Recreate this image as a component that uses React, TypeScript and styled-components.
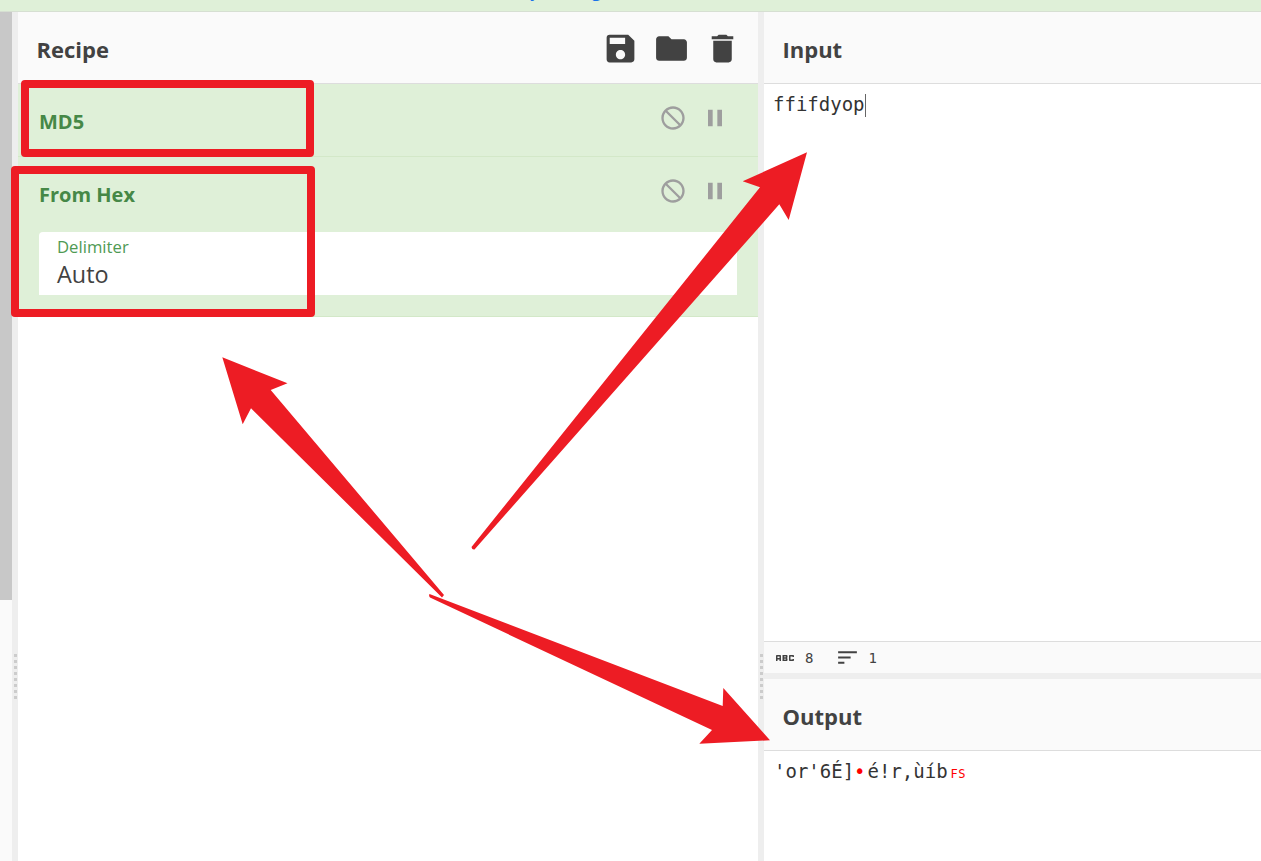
import styled, { createGlobalStyle } from 'styled-components'
import { MdAbc, MdBlock, MdDelete, MdFolder, MdPause, MdSave, MdSort } from 'react-icons/md'

const sans = `'Open Sans', 'Noto Sans', sans-serif`
const mono = `'DejaVu Sans Mono', 'Liberation Mono', monospace`

function Operation({ name, children }: { name: string; children?: React.ReactNode }) {
  return (
    <OpRow>
      <OpTop>
        <OpName>{name}</OpName>
        <OpControls>
          <DisableIcon size={28} />
          <MdPause size={28} />
        </OpControls>
      </OpTop>
      {children}
    </OpRow>
  )
}

export default function App() {
  return (
    <Page>
      <GlobalStyle />
      <Banner>
        <BannerText>by clicking</BannerText>
      </Banner>
      <Main>
        <ScrollTrack>
          <ScrollThumb />
        </ScrollTrack>
        <VGutter>
          <Grip />
        </VGutter>
        <Panel>
          <Header>
            <Title>Recipe</Title>
            <Tools>
              <MdSave size={37} />
              <MdFolder size={37} />
              <MdDelete size={37} />
            </Tools>
          </Header>
          <Operation name="MD5" />
          <Operation name="From Hex">
            <ArgBox>
              <ArgLabel>Delimiter</ArgLabel>
              <ArgValue>Auto</ArgValue>
            </ArgBox>
          </Operation>
        </Panel>
        <VGutter>
          <Grip />
        </VGutter>
        <RightColumn>
          <InputPane>
            <Header>
              <Title>Input</Title>
            </Header>
            <Editor>
              ffifdyop
              <Caret />
            </Editor>
            <StatusBar>
              <Stat>
                <MdAbc size={24} />
                <StatValue>8</StatValue>
              </Stat>
              <Stat>
                <MdSort size={25} />
                <StatValue>1</StatValue>
              </Stat>
            </StatusBar>
          </InputPane>
          <HGutter />
          <OutputPane>
            <Header>
              <Title>Output</Title>
            </Header>
            <OutputText>
              'or'6É]<ControlDot>•</ControlDot>é!r,ùíb<ControlName>FS</ControlName>
            </OutputText>
          </OutputPane>
        </RightColumn>
      </Main>

      <RedBox $left={21} $top={80} $width={293} $height={77} />
      <RedBox $left={11} $top={166} $width={304} $height={151} />
      <Arrows viewBox="0 0 1261 861">
        <path d="M222.3 357.3 L287.5 383.3 L270.7 390 L444 595 L442 597.5 L251 408.3 L242.7 424.3 Z" />
        <path d="M807 152.3 L742.7 181.3 L760 187.3 L471.5 547 Q472 550 474.5 549.5 L779.3 204.3 L788.7 220 Z" />
        <path d="M429.5 594 L722.7 706 L723.3 688 L770 740.3 L699.3 743.7 L712 730 L430 597.5 Q428.5 596 429.5 594 Z" />
      </Arrows>
    </Page>
  )
}

const GlobalStyle = createGlobalStyle`
  html, body {
    margin: 0;
    padding: 0;
    overflow: hidden;
    background: #fff;
  }
`

const Page = styled.div`
  position: relative;
  display: flex;
  flex-direction: column;
  height: 861px;
  overflow: hidden;
  font-family: ${sans};
  color: #424242;
`

const Banner = styled.div`
  flex: none;
  box-sizing: border-box;
  height: 12px;
  overflow: hidden;
  background: #dff0d8;
  border-bottom: 1px solid #d6dfd2;
  padding-left: 520px;
`

const BannerText = styled.div`
  margin-top: -21px;
  font-size: 17px;
  line-height: 24px;
  color: #1a73e8;
`

const Main = styled.div`
  flex: 1;
  min-height: 0;
  display: grid;
  grid-template-columns: 12px 6px 740px 6px 1fr;
`

const ScrollTrack = styled.div`
  background: #fafafa;
`

const ScrollThumb = styled.div`
  height: 588px;
  background: #c8c8c8;
`

const VGutter = styled.div`
  background: #eee;
  display: flex;
  justify-content: center;
  padding-top: 642px;
`

const Grip = styled.div`
  width: 3px;
  height: 45px;
  background: repeating-linear-gradient(to bottom, #ccc 0 3px, transparent 3px 6px);
`

const Panel = styled.div`
  display: flex;
  flex-direction: column;
  background: #fff;
`

const Header = styled.div`
  flex: none;
  box-sizing: border-box;
  height: 72px;
  display: flex;
  align-items: center;
  justify-content: space-between;
  padding: 3px 17px 0 19px;
  background: #fafafa;
  border-bottom: 1px solid #ddd;
`

const Title = styled.div`
  font-size: 22px;
  font-weight: 700;
  margin-left: -0.5px;
`

const Tools = styled.div`
  display: flex;
  gap: 14px;
  margin-top: -2px;
  color: #424242;
`

const OpRow = styled.div`
  background: #dff0d8;
  border-bottom: 1px solid #d3e8c8;
  padding: 0 21px 21px;
`

const OpTop = styled.div`
  height: 51px;
  display: flex;
  align-items: flex-end;
  justify-content: space-between;
`

const OpName = styled.div`
  font-size: 20px;
  font-weight: 700;
  line-height: 24px;
  color: #468847;
  margin: 0 0 1px 0;
`

const OpControls = styled.div`
  display: flex;
  gap: 14px;
  margin: 0 8px 3px 0;
  color: #9e9e9e;
`

const DisableIcon = styled(MdBlock)`
  transform: scaleX(-1);
`

const ArgBox = styled.div`
  box-sizing: border-box;
  height: 63px;
  margin-top: 24px;
  padding: 5px 18px 0;
  background: #fff;
  border-top-left-radius: 4px;
`

const ArgLabel = styled.div`
  font-size: 16.7px;
  line-height: 20px;
  color: #4f9a54;
`

const ArgValue = styled.div`
  font-size: 23.4px;
  line-height: 32px;
  margin-top: 1px;
`

const RightColumn = styled.div`
  display: flex;
  flex-direction: column;
  min-width: 0;
`

const InputPane = styled.div`
  box-sizing: border-box;
  height: 661px;
  display: flex;
  flex-direction: column;
`

const Editor = styled.div`
  flex: 1;
  padding: 8px 10px 0 9px;
  font-family: ${mono};
  font-size: 19px;
  line-height: 24px;
  color: #333;
`

const Caret = styled.span`
  display: inline-block;
  width: 1px;
  height: 23px;
  background: #666;
  vertical-align: -6px;
`

const StatusBar = styled.div`
  flex: none;
  box-sizing: border-box;
  height: 32px;
  display: flex;
  align-items: center;
  gap: 22px;
  padding: 0 0 0 9px;
  background: #fafafa;
  border-top: 1px solid #ddd;
  color: #424242;
`

const Stat = styled.div`
  display: flex;
  align-items: center;
  gap: 8px;
`

const StatValue = styled.span`
  font-family: ${mono};
  font-size: 14px;
`

const HGutter = styled.div`
  flex: none;
  height: 6px;
  background: #eee;
`

const OutputPane = styled.div`
  flex: 1;
  display: flex;
  flex-direction: column;
`

const OutputText = styled.div`
  padding: 8px 10px 0;
  font-family: ${mono};
  font-size: 19px;
  line-height: 24px;
  color: #333;
  white-space: pre;
`

const ControlDot = styled.span`
  margin-right: 2px;
  color: #f00;
`

const ControlName = styled.span`
  margin-left: 3px;
  font-size: 12px;
  letter-spacing: 0.5px;
  color: #f00;
`

const RedBox = styled.div<{ $left: number; $top: number; $width: number; $height: number }>`
  position: absolute;
  box-sizing: border-box;
  left: ${({ $left }) => $left}px;
  top: ${({ $top }) => $top}px;
  width: ${({ $width }) => $width}px;
  height: ${({ $height }) => $height}px;
  border: 8px solid #ed1c24;
  border-radius: 4px;
`

const Arrows = styled.svg`
  position: absolute;
  inset: 0;
  width: 1261px;
  height: 861px;
  fill: #ed1c24;
  pointer-events: none;
`
